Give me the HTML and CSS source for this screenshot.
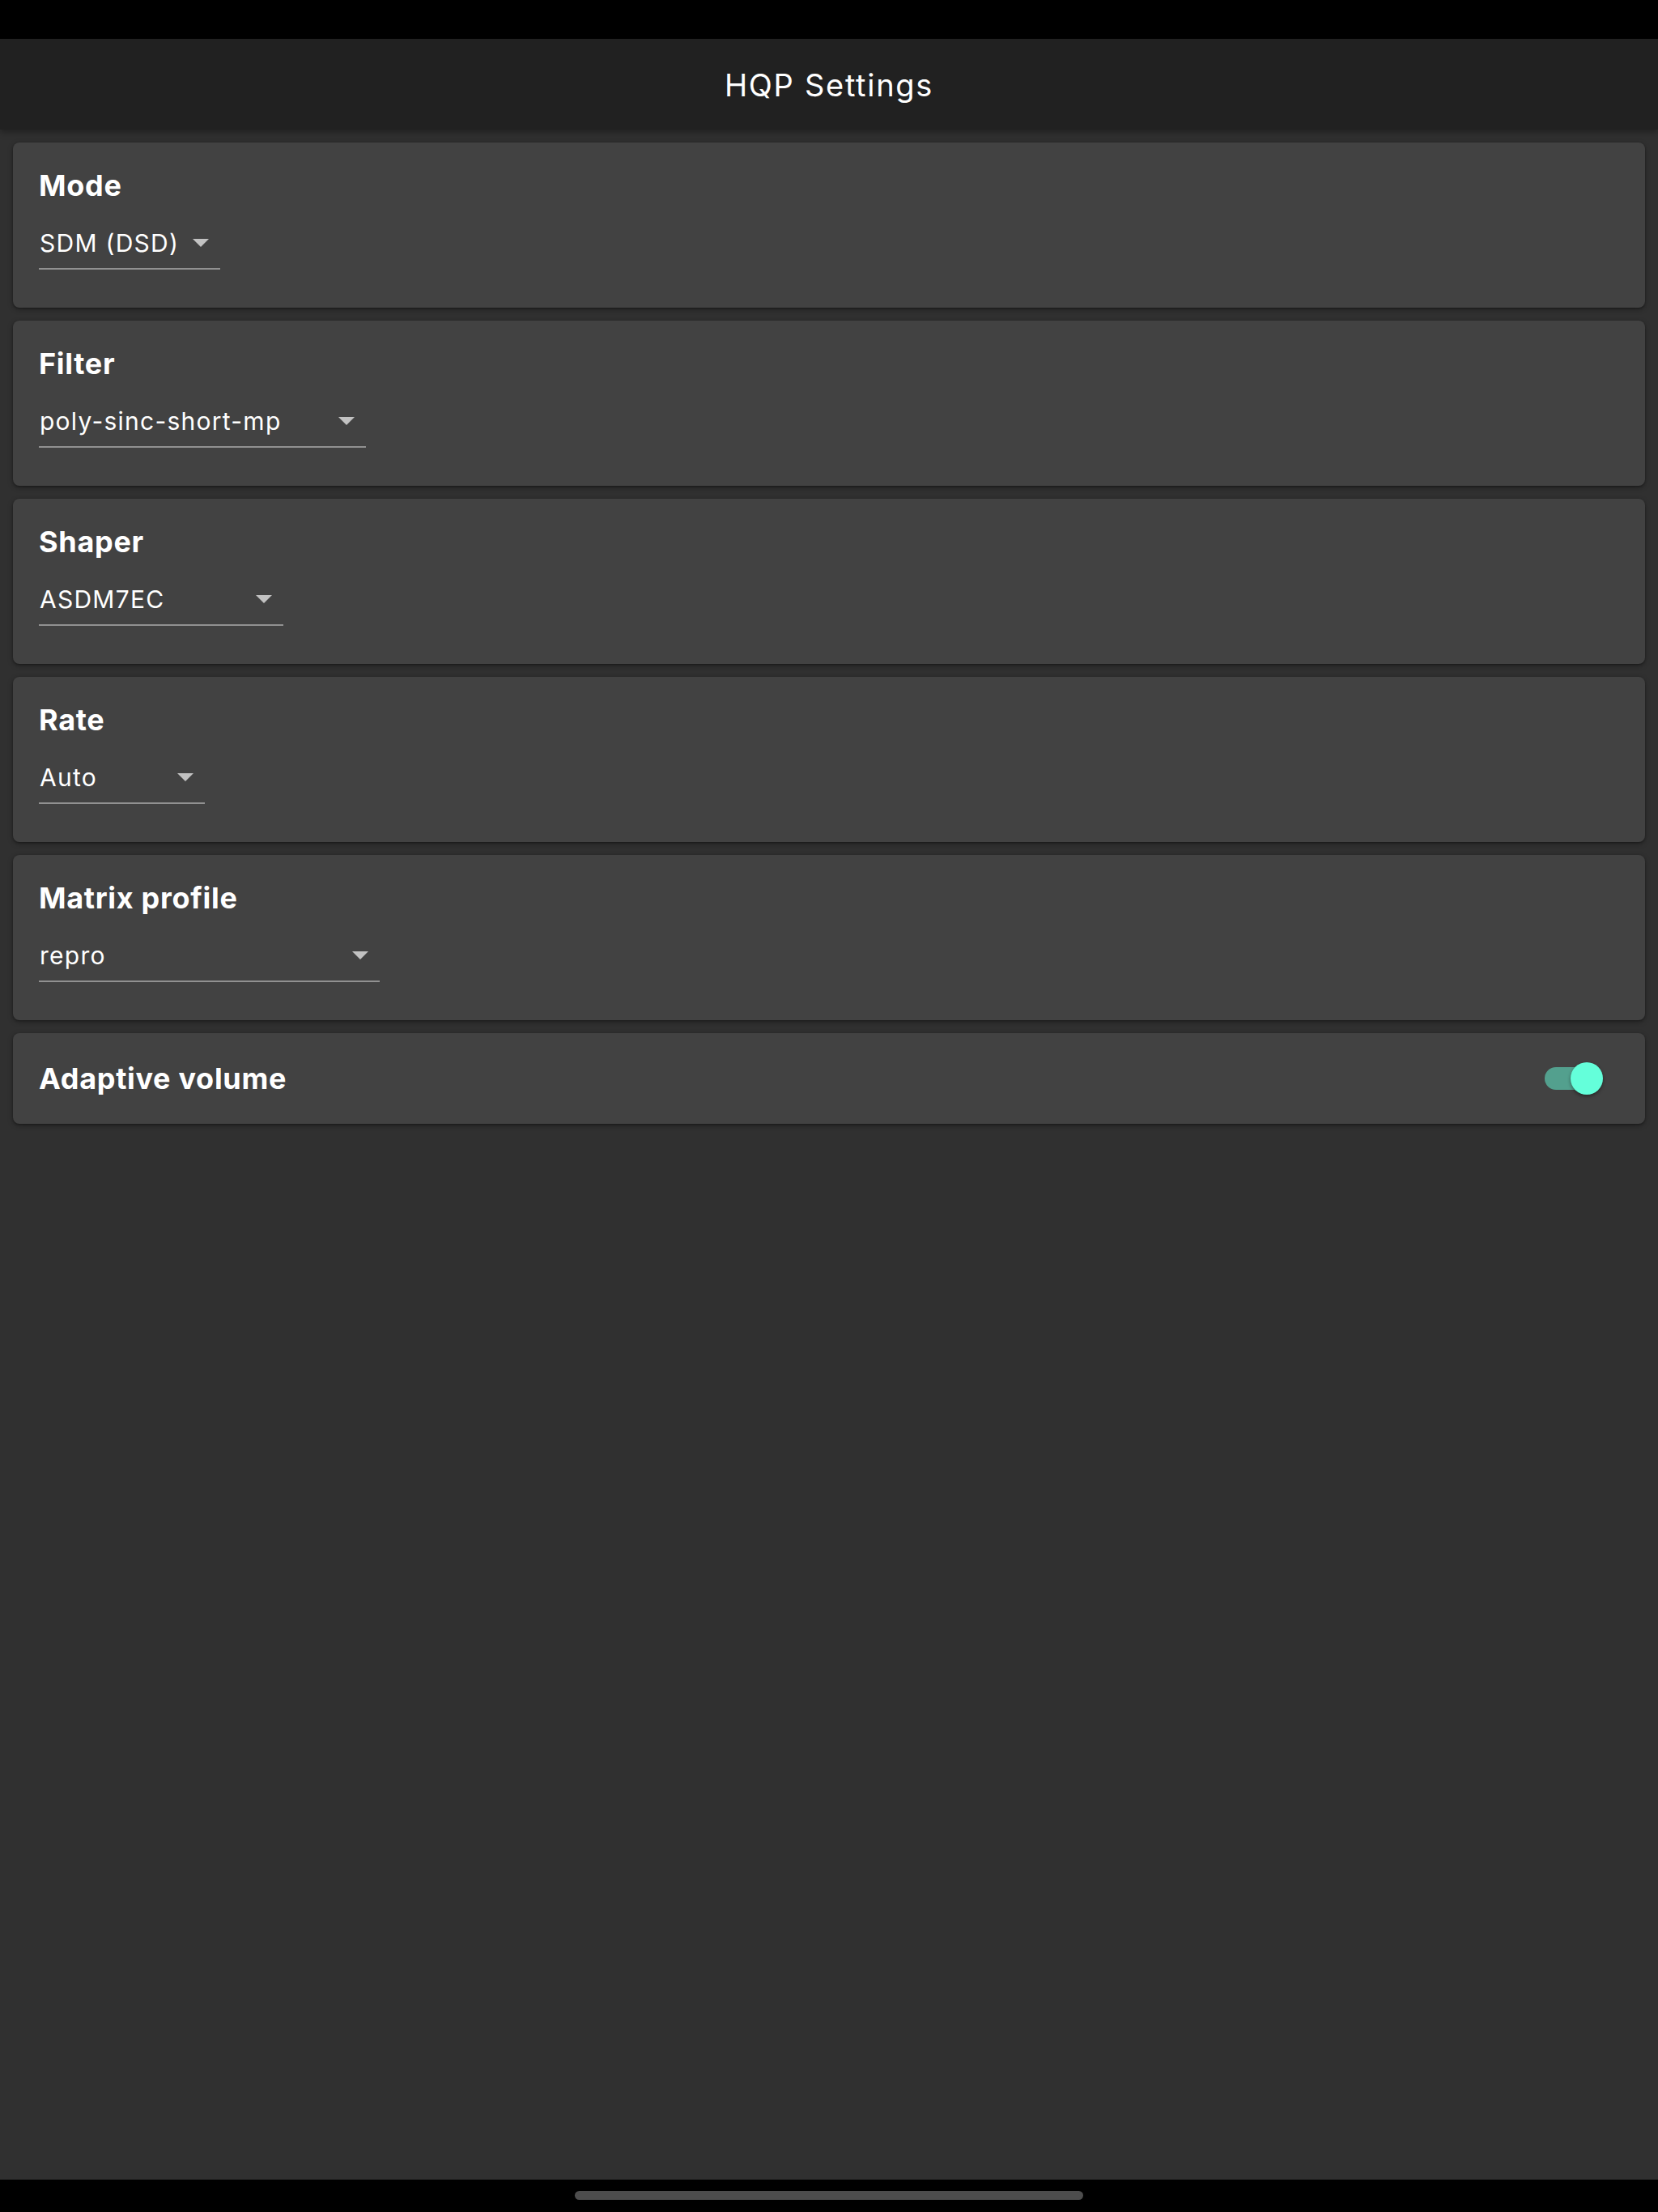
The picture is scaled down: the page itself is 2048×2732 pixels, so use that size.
FILE: index.html
```html
<!DOCTYPE html>
<html lang="en">
<head>
<meta charset="utf-8">
<title>HQP Settings</title>
<link rel="stylesheet" href="styles.css">
</head>
<body>
<div class="app">
  <div class="status-bar"></div>
  <header class="app-bar"><h1 class="app-title">HQP Settings</h1></header>
  <main class="content">
    <section class="card">
      <h2 class="card-title">Mode</h2>
      <div class="select select-mode"><span class="select-value">SDM (DSD)</span><svg class="arrow" viewBox="0 0 20 10"><path d="M0 0h20L10 10z"/></svg></div>
    </section>
    <section class="card">
      <h2 class="card-title">Filter</h2>
      <div class="select select-filter"><span class="select-value">poly-sinc-short-mp</span><svg class="arrow" viewBox="0 0 20 10"><path d="M0 0h20L10 10z"/></svg></div>
    </section>
    <section class="card">
      <h2 class="card-title">Shaper</h2>
      <div class="select select-shaper"><span class="select-value">ASDM7EC</span><svg class="arrow" viewBox="0 0 20 10"><path d="M0 0h20L10 10z"/></svg></div>
    </section>
    <section class="card">
      <h2 class="card-title">Rate</h2>
      <div class="select select-rate"><span class="select-value">Auto</span><svg class="arrow" viewBox="0 0 20 10"><path d="M0 0h20L10 10z"/></svg></div>
    </section>
    <section class="card">
      <h2 class="card-title">Matrix profile</h2>
      <div class="select select-matrix"><span class="select-value">repro</span><svg class="arrow" viewBox="0 0 20 10"><path d="M0 0h20L10 10z"/></svg></div>
    </section>
    <section class="card card-toggle">
      <h2 class="card-title">Adaptive volume</h2>
      <div class="switch on"><span class="switch-track"></span><span class="switch-thumb"></span></div>
    </section>
  </main>
  <footer class="home-bar"><span class="home-indicator"></span></footer>
</div>
</body>
</html>
```
FILE: styles.css
```css
* { box-sizing: border-box; }
html, body { margin: 0; padding: 0; }
body {
  background: #303030;
  color: #ffffff;
  font-family: Inter, "Noto Sans", "Liberation Sans", sans-serif;
}
.app {
  display: flex;
  flex-direction: column;
  height: 2732px;
}
.status-bar {
  height: 48px;
  background: #000000;
  flex: none;
}
.app-bar {
  height: 112px;
  flex: none;
  background: #212121;
  display: flex;
  align-items: center;
  justify-content: center;
  box-shadow: 0 3px 8px rgba(0,0,0,0.35);
  position: relative;
  z-index: 1;
}
.app-title {
  margin: 0;
  font-size: 38px;
  font-weight: 400;
  line-height: 46px;
  letter-spacing: 1.7px;
  padding-top: 2px;
}
.content {
  flex: 1;
  padding: 16px;
  display: flex;
  flex-direction: column;
  gap: 16px;
}
.card {
  background: #424242;
  border-radius: 8px;
  box-shadow: 0 2px 6px rgba(0,0,0,0.35), 0 1px 2px rgba(0,0,0,0.25);
  padding: 32px 32px 47px 32px;
}
.card-title {
  margin: 0;
  font-size: 36px;
  font-weight: 700;
  line-height: 42px;
  letter-spacing: 0.7px;
}
.select {
  margin-top: 32px;
  display: flex;
  align-items: center;
  justify-content: space-between;
  height: 51px;
  padding-bottom: 13px;
  border-bottom: 2px solid rgba(255,255,255,0.42);
}
.select-value {
  font-size: 30px;
  line-height: 36px;
  letter-spacing: 1.25px;
  padding-left: 1px;
}
.arrow {
  width: 20px;
  height: 10px;
  margin-right: 14px;
  fill: #c2c2c2;
  flex: none;
}
.select-mode { width: 224px; }
.select-filter { width: 404px; }
.select-shaper { width: 302px; }
.select-rate { width: 205px; }
.select-matrix { width: 421px; }
.card-toggle {
  height: 112px;
  padding: 0 52px 0 32px;
  display: flex;
  align-items: center;
  justify-content: space-between;
}
.switch {
  position: relative;
  width: 72px;
  height: 40px;
}
.switch-track {
  position: absolute;
  left: 0;
  top: 6px;
  width: 66px;
  height: 28px;
  border-radius: 14px;
  background: #53a08e;
}
.switch-thumb {
  position: absolute;
  left: 32px;
  top: 0;
  width: 40px;
  height: 40px;
  border-radius: 50%;
  background: #64ffda;
  box-shadow: 0 2px 4px rgba(0,0,0,0.4);
}
.home-bar {
  height: 40px;
  flex: none;
  background: #000000;
  display: flex;
  justify-content: center;
  padding-top: 14px;
}
.home-indicator {
  width: 628px;
  height: 11px;
  border-radius: 6px;
  background: #4d4d4d;
}
```
